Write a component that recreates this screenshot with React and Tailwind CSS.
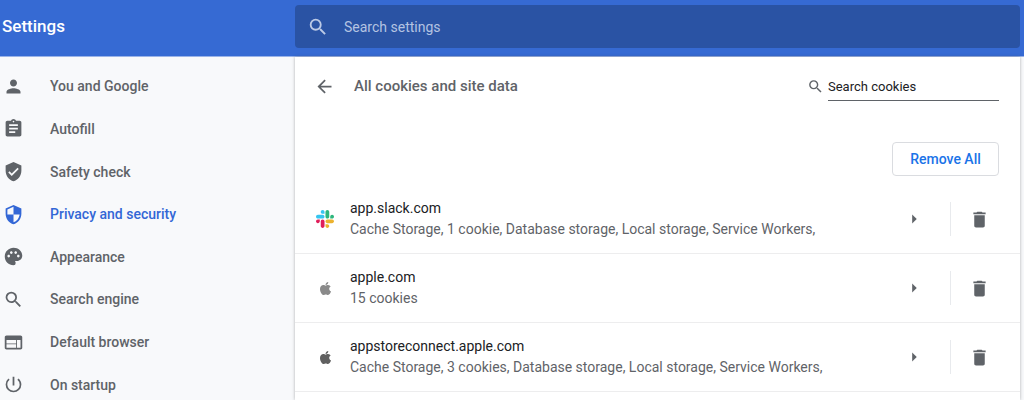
import {
  MdArrowBack,
  MdArrowRight,
  MdAssignment,
  MdDelete,
  MdPalette,
  MdPerson,
  MdPowerSettingsNew,
  MdSearch,
  MdSecurity,
  MdVerifiedUser,
  MdWeb,
} from 'react-icons/md'
import { FaApple } from 'react-icons/fa'

const menuItems = [
  { label: 'You and Google', icon: MdPerson },
  { label: 'Autofill', icon: MdAssignment },
  { label: 'Safety check', icon: MdVerifiedUser },
  { label: 'Privacy and security', icon: MdSecurity, active: true },
  { label: 'Appearance', icon: MdPalette },
  { label: 'Search engine', icon: MdSearch },
  { label: 'Default browser', icon: MdWeb },
  { label: 'On startup', icon: MdPowerSettingsNew },
]

const sites = [
  {
    host: 'app.slack.com',
    data: 'Cache Storage, 1 cookie, Database storage, Local storage, Service Workers,',
    icon: <SlackIcon />,
  },
  {
    host: 'apple.com',
    data: '15 cookies',
    icon: <FaApple className="size-[15px] text-[#8a8a8a]" />,
  },
  {
    host: 'appstoreconnect.apple.com',
    data: 'Cache Storage, 3 cookies, Database storage, Local storage, Service Workers,',
    icon: <FaApple className="size-[15px] text-[#606060]" />,
  },
]

function SlackIcon() {
  return (
    <svg viewBox="0 0 122.8 122.8" className="size-[18px]" aria-hidden="true">
      <path
        fill="#E01E5A"
        d="M25.8 77.6c0 7.1-5.8 12.9-12.9 12.9S0 84.7 0 77.6s5.8-12.9 12.9-12.9h12.9v12.9zm6.5 0c0-7.1 5.8-12.9 12.9-12.9s12.9 5.8 12.9 12.9v32.3c0 7.1-5.8 12.9-12.9 12.9s-12.9-5.8-12.9-12.9V77.6z"
      />
      <path
        fill="#36C5F0"
        d="M45.2 25.8c-7.1 0-12.9-5.8-12.9-12.9S38.1 0 45.2 0s12.9 5.8 12.9 12.9v12.9H45.2zm0 6.5c7.1 0 12.9 5.8 12.9 12.9s-5.8 12.9-12.9 12.9H12.9C5.8 58.1 0 52.3 0 45.2s5.8-12.9 12.9-12.9h32.3z"
      />
      <path
        fill="#2EB67D"
        d="M97 45.2c0-7.1 5.8-12.9 12.9-12.9s12.9 5.8 12.9 12.9-5.8 12.9-12.9 12.9H97V45.2zm-6.5 0c0 7.1-5.8 12.9-12.9 12.9s-12.9-5.8-12.9-12.9V12.9C64.7 5.8 70.5 0 77.6 0s12.9 5.8 12.9 12.9v32.3z"
      />
      <path
        fill="#ECB22E"
        d="M77.6 97c7.1 0 12.9 5.8 12.9 12.9s-5.8 12.9-12.9 12.9-12.9-5.8-12.9-12.9V97h12.9zm0-6.5c-7.1 0-12.9-5.8-12.9-12.9s5.8-12.9 12.9-12.9h32.3c7.1 0 12.9 5.8 12.9 12.9s-5.8 12.9-12.9 12.9H77.6z"
      />
    </svg>
  )
}

function Header() {
  return (
    <header className="flex h-14 shrink-0 bg-[#366ad3] pr-1">
      <h1 className="flex w-[295px] shrink-0 items-center pb-0.5 pl-0.5 text-[17px] font-medium text-white">Settings</h1>
      <label className="mt-[5px] mb-2 flex flex-1 items-center gap-[15px] rounded-sm bg-[#2a53a4] pl-3 text-[#bccae6]">
        <MdSearch className="size-[22px] shrink-0" />
        <input
          type="text"
          aria-label="Search settings"
          placeholder="Search settings"
          className="min-w-0 flex-1 bg-transparent text-sm outline-none placeholder:text-[#b4c3e2]"
        />
      </label>
    </header>
  )
}

function Sidebar() {
  return (
    <nav className="w-[295px] shrink-0 pt-2">
      <ul className="grid h-[341px] grid-rows-8">
        {menuItems.map(({ label, icon: Icon, active }) => (
          <li key={label} className="flex">
            <a
              href="#"
              aria-current={active ? 'page' : undefined}
              className={`flex flex-1 items-center gap-[26px] pl-[3px] text-sm font-medium ${
                active ? 'text-[#3367d6]' : 'text-[#5f6368]'
              }`}
            >
              <Icon className="size-[21px]" />
              {label}
            </a>
          </li>
        ))}
      </ul>
    </nav>
  )
}

function SiteRow({ host, data, icon }) {
  return (
    <li className="flex h-[69px] items-center border-b border-[#ededee] pr-[30px] pl-5">
      <span className="flex w-5 shrink-0 justify-center">{icon}</span>
      <div className="min-w-0 flex-1 pl-[15px] text-sm leading-[21px]">
        <p className="truncate text-[#202124]">{host}</p>
        <p className="truncate text-[#5f6368]">{data}</p>
      </div>
      <button type="button" aria-label={`Show details for ${host}`} className="mr-[25px] text-[#5f6368]">
        <MdArrowRight className="size-[22px]" />
      </button>
      <button
        type="button"
        aria-label={`Remove ${host}`}
        className="flex h-[34px] items-center border-l border-[#e8eaed] pl-[18px] text-[#5f6368]"
      >
        <MdDelete className="size-[21px]" />
      </button>
    </li>
  )
}

export default function App() {
  return (
    <div className="flex h-screen flex-col overflow-hidden bg-[#f8f9fb] font-['Roboto',sans-serif]">
      <Header />
      <div className="flex min-h-0 flex-1 border-t border-[#9ab3e8] pr-1">
        <Sidebar />
        <main className="min-w-0 flex-1 bg-white shadow-[0_0_3px_rgba(60,64,67,0.4)]">
          <div className="flex h-[59px] items-center pr-[21px] pl-[19px]">
            <button type="button" aria-label="Back" className="text-[#5f6368]">
              <MdArrowBack className="size-[21px]" />
            </button>
            <h2 className="flex-1 pl-[19px] text-[15px] font-medium text-[#5f6368]">All cookies and site data</h2>
            <MdSearch className="mr-1 size-[17px] text-[#5f6368]" />
            <input
              type="text"
              aria-label="Search cookies"
              placeholder="Search cookies"
              className="h-7 w-[171px] border-b border-[#5f6368] bg-transparent text-[13px] outline-none placeholder:text-[#202124]"
            />
          </div>
          <div className="flex justify-end pt-[26px] pr-[21px] pb-[9px]">
            <button
              type="button"
              className="h-[34px] w-[107px] rounded-sm border border-[#dadce0] text-sm font-medium text-[#1a73e8]"
            >
              Remove All
            </button>
          </div>
          <ul>
            {sites.map((site) => (
              <SiteRow key={site.host} {...site} />
            ))}
          </ul>
        </main>
      </div>
    </div>
  )
}
